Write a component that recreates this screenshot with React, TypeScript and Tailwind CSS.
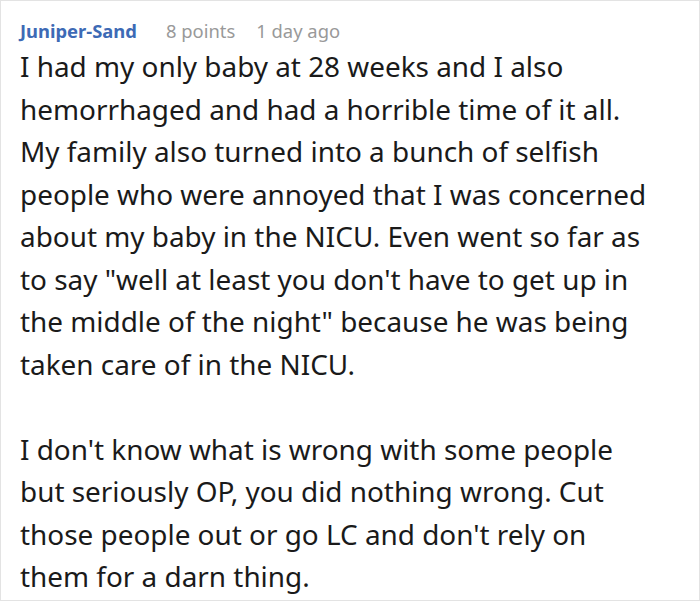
export default function App() {
  return (
    <div className="w-[700px] h-[601px] bg-white border border-[#e3e3e3] box-border overflow-hidden font-['Noto_Sans',sans-serif]">
      <div className="w-[656px] pl-[19px] pt-[17px]">
        {/* comment header */}
        <div className="flex items-baseline text-[18.4px] leading-[26px]">
          <span className="font-bold text-[#3d6ab5]">Juniper-Sand</span>
          <span className="ml-[29px] text-[#999]">8 points</span>
          <span className="ml-[21px] text-[#999]">1 day ago</span>
        </div>

        {/* comment body */}
        <div className="mt-[1px] text-[27.9px] leading-[42.5px] text-[#1a1a1a]">
          <p>
            I had my only baby at 28 weeks and I also hemorrhaged and had a horrible time of it all. My family also
            turned into a bunch of selfish people who were annoyed that I was concerned about my baby in the NICU. Even
            went so far as to say "well at least you don't have to get up in the middle of the night" because he was
            being taken care of in the NICU.
          </p>
          <p className="mt-[42.5px]">
            I don't know what is wrong with some people but seriously OP, you did nothing wrong. Cut those people out
            or go LC and don't rely on them for a darn thing.
          </p>
        </div>
      </div>
    </div>
  );
}
